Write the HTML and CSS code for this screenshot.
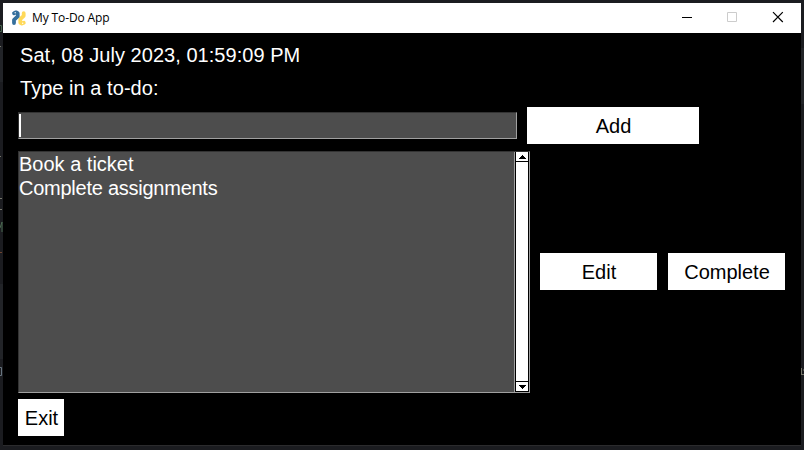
FILE: index.html
```html
<!DOCTYPE html>
<html lang="en">
<head>
<meta charset="utf-8">
<title>My To-Do App</title>
<link rel="stylesheet" href="styles.css">
</head>
<body>
<svg class="backdrop" width="804" height="450" aria-hidden="true">
  <path fill="#222428" d="M0 46h3v36H0zM0 284h3v75H0zM801 48h3v56h-3z"/>
  <path fill="none" stroke="#48664e" d="M0 25.500h1.500v6H0M0 228l2-6v10"/>
  <path fill="none" stroke="#77776b" d="M0 46.500h1M0 156.500h1M0 198.500h2M0 209.500h2"/>
  <path fill="none" stroke="#70442f" d="M0 252.500h2"/>
  <path fill="none" stroke="#687580" d="M0 367.500h1.500v8H0"/>
  <path fill="none" stroke="#77776b" d="M801.500 368v7M803 370h1M802 374.500h2"/>
</svg>
<div class="window">
  <header class="titlebar">
    <svg class="logo" width="16" height="16" viewBox="0 0 16 16" fill="none" stroke-linecap="round" stroke-linejoin="round">
      <path stroke="#ffd95a" stroke-width="3.800" d="M12.700 3.200v2.600L9.300 9.200v3.600l1.500.8 2-.9"/>
      <path stroke="#356f9c" stroke-width="3.800" d="M3 3.200l2-.9 1.700.9v3.200L3 9.800v3.200"/>
      <circle cx="4.200" cy="2.700" r=".7" fill="#fff"/>
      <circle cx="11.700" cy="13.200" r=".7" fill="#fff"/>
    </svg>
    <h1 class="title">My To-Do App</h1>
    <svg class="controls" width="138" height="30" fill="none">
      <path stroke="#000" d="M19 14.500h10"/>
      <path stroke="#ccc" d="M64.500 9.500h9v9h-9z"/>
      <path stroke="#000" stroke-width="1.200" d="M110 9.200l9.800 9.800M119.800 9.200L110 19"/>
    </svg>
  </header>
  <main class="content">
    <div class="clock">Sat, 08 July 2023, 01:59:09 PM</div>
    <div class="label">Type in a to-do:</div>
    <div class="row entry-row">
      <div class="entry"><span class="caret"></span></div>
      <button class="btn add">Add</button>
    </div>
    <div class="row list-row">
      <div class="listbox">
        <ul class="items"><li>Book a ticket</li><li class="tight">Complete assignments</li></ul>
        <div class="scrollbar">
          <svg class="arrow up" width="12" height="10"><path d="M6 3h1v1h1v1h1v1h1v1H3V6h1V5h1V4h1z"/></svg>
          <svg class="arrow down" width="12" height="10"><path d="M3 3h7v1H9v1H8v1H7v1H6V6H5V5H4V4H3z"/></svg>
        </div>
      </div>
      <button class="btn action">Edit</button>
      <button class="btn action last">Complete</button>
    </div>
    <button class="btn exit">Exit</button>
  </main>
</div>
</body>
</html>
```
FILE: styles.css
```css
* { box-sizing: border-box; }
body {
  margin: 0;
  width: 804px;
  height: 450px;
  padding: 3px;
  background: #1b1c20;
  overflow: hidden;
  font-family: "Liberation Sans", Arial, sans-serif;
}
.backdrop { position: absolute; left: 0; top: 0; }
.window {
  position: relative;
  width: 798px;
  height: 442px;
  background: #000;
  box-shadow: 0 1px 0 #2b2b2d;
}
.titlebar {
  display: flex;
  align-items: center;
  height: 30px;
  padding-left: 8px;
  background: #fff;
}
.logo { margin-right: 5px; }
.title {
  margin: 0;
  flex: 1;
  font: 400 12px/30px "Open Sans", "Noto Sans", sans-serif;
  letter-spacing: -0.12px;
  color: #000;
}
.content { padding: 10px 15px 0; color: #fff; font-size: 20px; }
.clock, .label { height: 33px; line-height: 24px; padding-left: 2px; letter-spacing: 0.04px; }
.label { height: 31px; }
.row { display: flex; align-items: center; }
.entry-row { height: 37px; gap: 10px; }
.entry {
  width: 499px;
  height: 27px;
  background: #4d4d4d;
  border: 1px solid #333;
  border-right-color: #a0a0a0;
  border-bottom-color: #a0a0a0;
}
.caret { display: block; width: 2px; height: 23px; margin-top: 1px; background: #fff; }
.btn {
  height: 37px;
  padding: 2px 0 0 1px;
  border: 0;
  background: #fff;
  color: #000;
  font: inherit;
}
.add { width: 172px; }
.list-row { margin-top: 7px; height: 242px; }
.listbox {
  display: flex;
  width: 512px;
  height: 242px;
  background: #4d4d4d;
  border: 1px solid #333;
  border-right-color: #a0a0a0;
  border-bottom-color: #a0a0a0;
}
.items { flex: 1; margin: 0; padding: 0; list-style: none; line-height: 24px; border-right: 1px solid #a0a0a0; }
.tight { letter-spacing: -0.25px; }
.scrollbar {
  display: flex;
  flex-direction: column;
  justify-content: space-between;
  width: 14px;
  background: #fff;
  border: 1px solid #000;
  border-top: 0;
}
.arrow { display: block; }
.up { border-bottom: 1px solid #000; }
.down { border-top: 1px solid #000; }
.action { width: 117px; margin: 0 0 2px 10px; }
.last { margin-left: 11px; }
.exit { display: block; width: 46px; margin-top: 6px; }
```
